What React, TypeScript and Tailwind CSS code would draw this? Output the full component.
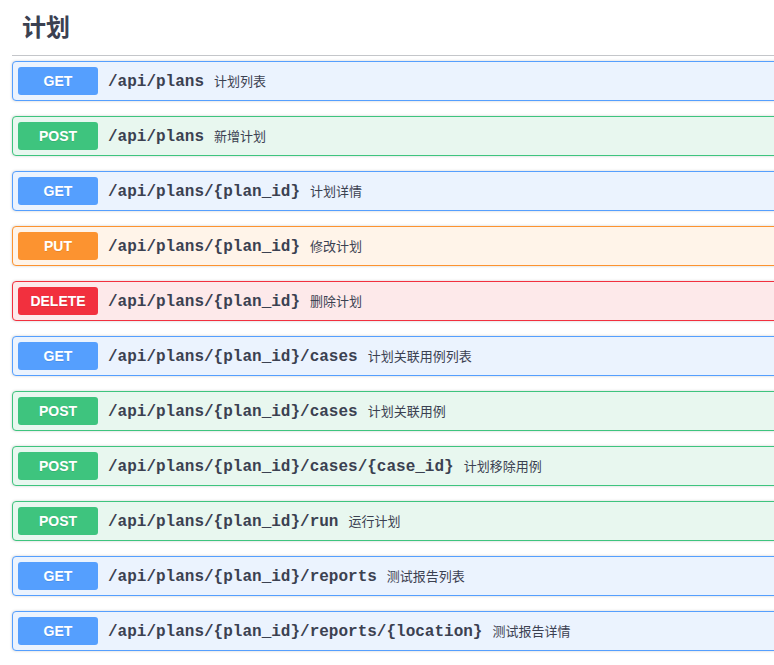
import React from "react";

type Method = "GET" | "POST" | "PUT" | "DELETE";

const ops: { m: Method; path: string; desc: string }[] = [
  { m: "GET", path: "/api/plans", desc: "计划列表" },
  { m: "POST", path: "/api/plans", desc: "新增计划" },
  { m: "GET", path: "/api/plans/{plan_id}", desc: "计划详情" },
  { m: "PUT", path: "/api/plans/{plan_id}", desc: "修改计划" },
  { m: "DELETE", path: "/api/plans/{plan_id}", desc: "删除计划" },
  { m: "GET", path: "/api/plans/{plan_id}/cases", desc: "计划关联用例列表" },
  { m: "POST", path: "/api/plans/{plan_id}/cases", desc: "计划关联用例" },
  { m: "POST", path: "/api/plans/{plan_id}/cases/{case_id}", desc: "计划移除用例" },
  { m: "POST", path: "/api/plans/{plan_id}/run", desc: "运行计划" },
  { m: "GET", path: "/api/plans/{plan_id}/reports", desc: "测试报告列表" },
  { m: "GET", path: "/api/plans/{plan_id}/reports/{location}", desc: "测试报告详情" },
];

const blockCls: Record<Method, string> = {
  GET: "bg-[#ebf3fe] border-[#559ffe]",
  POST: "bg-[#e8f7ef] border-[#3ec47e]",
  PUT: "bg-[#fff4e9] border-[#fc9330]",
  DELETE: "bg-[#fde9ea] border-[#f2303e]",
};

const badgeCls: Record<Method, string> = {
  GET: "bg-[#559ffe]",
  POST: "bg-[#3ec47e]",
  PUT: "bg-[#fc9330]",
  DELETE: "bg-[#f2303e]",
};

export default function App() {
  return (
    <div className="w-[774px] h-[665px] overflow-hidden bg-white">
      <div className="w-[800px] pl-[12px]">
        <div className="h-[56px] flex items-center pl-[10px] border-b border-[rgba(59,65,81,0.3)] mb-[5px]">
          <h3
            className="text-[24px] font-bold text-[#3b4151] leading-none"
            style={{ fontFamily: '"Liberation Sans", "Noto Sans CJK SC", sans-serif' }}
          >
            计划
          </h3>
        </div>
        <div className="flex flex-col gap-[15px]">
          {ops.map((o, i) => (
            <div
              key={i}
              className={`h-[40px] border rounded-[4px] shadow-[0_0_3px_rgba(0,0,0,0.19)] flex items-center px-[5px] ${blockCls[o.m]}`}
            >
              <span
                className={`w-[80px] h-[28px] flex items-center justify-center rounded-[3px] text-white text-[14px] font-bold [text-shadow:0_1px_0_rgba(0,0,0,0.1)] ${badgeCls[o.m]}`}
                style={{ fontFamily: '"Liberation Sans", sans-serif' }}
              >
                {o.m}
              </span>
              <span
                className="px-[10px] text-[16px] font-bold text-[#3b4151] mt-[2px]"
                style={{ fontFamily: '"Liberation Mono", monospace' }}
              >
                {o.path}
              </span>
              <span
                className="text-[13px] text-[#3b4151]"
                style={{ fontFamily: '"Noto Sans CJK SC", sans-serif' }}
              >
                {o.desc}
              </span>
            </div>
          ))}
        </div>
      </div>
    </div>
  );
}
